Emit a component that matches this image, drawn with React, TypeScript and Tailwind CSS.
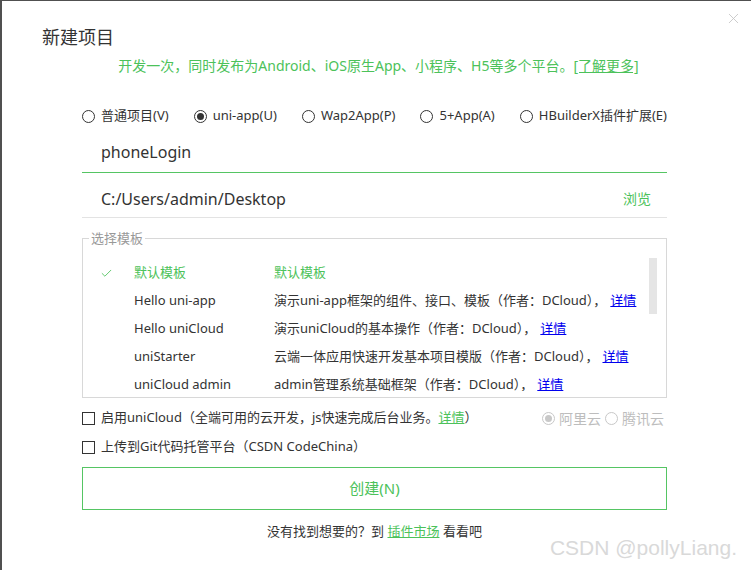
import { X, Check } from 'lucide-react';

const templates = [
  { name: '默认模板', desc: '默认模板', link: false, active: true },
  { name: 'Hello uni-app', desc: '演示uni-app框架的组件、接口、模板（作者：DCloud），', link: true, active: false },
  { name: 'Hello uniCloud', desc: '演示uniCloud的基本操作（作者：DCloud），', link: true, active: false },
  { name: 'uniStarter', desc: '云端一体应用快速开发基本项目模版（作者：DCloud），', link: true, active: false },
  { name: 'uniCloud admin', desc: 'admin管理系统基础框架（作者：DCloud），', link: true, active: false },
];

const types = ['普通项目(V)', 'uni-app(U)', 'Wap2App(P)', '5+App(A)', 'HBuilderX插件扩展(E)'];

function Radio({ checked, muted }: { checked?: boolean; muted?: boolean }) {
  return (
    <span
      className={`w-[13px] h-[13px] rounded-full border flex items-center justify-center shrink-0 ${
        muted ? 'border-[#c8c8c8]' : 'border-[#333]'
      }`}
    >
      {checked && <span className={`w-[7px] h-[7px] rounded-full ${muted ? 'bg-[#c8c8c8]' : 'bg-[#333]'}`} />}
    </span>
  );
}

function Box() {
  return <span className="w-[13px] h-[13px] border border-[#333] shrink-0" />;
}

export default function App() {
  return (
    <div
      className="relative w-[751px] h-[570px] bg-white border-t border-l-2 border-[#505050] text-[#333] overflow-hidden"
      style={{ fontFamily: '"Microsoft YaHei", "Noto Sans", "Noto Sans CJK SC", sans-serif' }}
    >
      <button className="absolute right-[9px] top-[9px] text-[#c4c4c4]">
        <X size={17} strokeWidth={1.2} />
      </button>

      <div className="pl-[40px] pt-[24px] h-[55px] text-[18px] leading-[24px]">新建项目</div>
      <div className="text-center text-[14px] leading-[20px] text-[#4cc25a] pl-[4px]">
        开发一次，同时发布为Android、iOS原生App、小程序、H5等多个平台。
        <span className="underline">[了解更多]</span>
      </div>

      <div className="ml-[80px] w-[585px] mt-[27px]">
        <div className="flex items-center justify-between h-[26px] text-[13px]">
          {types.map((t, i) => (
            <label key={t} className="flex items-center gap-[6px]">
              <Radio checked={i === 1} />
              <span>{t}</span>
            </label>
          ))}
        </div>

        <div className="flex items-center h-[42px] mt-[2px] pl-[19px] pt-[1px] text-[16px] border-b border-[#55c563]">
          phoneLogin
        </div>
        <div className="flex items-center justify-between h-[45px] pl-[19px] pr-[16px] pt-[7px] text-[16px] border-b border-[#e3e3e3]">
          <span>C:/Users/admin/Desktop</span>
          <span className="text-[14px] text-[#4cc25a]">浏览</span>
        </div>

        <fieldset className="mt-[12px] h-[168px] border border-[#d8d8d8] relative">
          <legend className="ml-[6px] px-[2px] text-[13px] text-[#999] leading-[16px]">选择模板</legend>
          <div className="h-[145px] overflow-hidden pt-[13px] relative">
            {templates.map((t) => (
              <div key={t.name} className="flex items-center h-[28px] text-[13px]">
                <span className="w-[51px] pl-[17px]">
                  {t.active && <Check size={13} strokeWidth={1.6} className="text-[#4cc25a]" />}
                </span>
                <span className={`w-[140px] ${t.active ? 'text-[#4cc25a]' : ''}`}>{t.name}</span>
                <span className={t.active ? 'text-[#4cc25a]' : ''}>
                  {t.desc}
                  {t.link && <span className="ml-[4px] text-[#0000ee] underline">详情</span>}
                </span>
              </div>
            ))}
            <div className="absolute right-[9px] top-[12px] w-[8px] h-[56px] bg-[#e5e5e5]" />
          </div>
        </fieldset>

        <div className="flex items-center justify-between h-[28px] mt-[6px] text-[13px]">
          <label className="flex items-center gap-[6px]">
            <Box />
            <span>
              启用uniCloud（全端可用的云开发，js快速完成后台业务。<span className="text-[#4cc25a] underline">详情</span>）
            </span>
          </label>
          <div className="flex items-center gap-[4px] text-[14px] text-[#bdbdbd] pr-[3px]">
            <Radio checked muted />
            <span>阿里云</span>
            <Radio muted />
            <span>腾讯云</span>
          </div>
        </div>
        <label className="flex items-center gap-[6px] h-[30px] text-[13px]">
          <Box />
          <span>上传到Git代码托管平台（CSDN CodeChina）</span>
        </label>

        <button className="mt-[5px] w-full h-[43px] border border-[#55c563] text-[#4cc25a] text-[15px]">
          创建(N)
        </button>

        <div className="text-center text-[13px] mt-[11px] leading-[20px]">
          没有找到想要的？到 <span className="text-[#4cc25a] underline">插件市场</span> 看看吧
        </div>
      </div>

      <div
        className="absolute right-[14px] bottom-[7px] text-[21px] text-[#d9d9d9]"
        style={{ fontFamily: '"Liberation Sans", Arial, sans-serif' }}
      >
        CSDN @pollyLiang.
      </div>
    </div>
  );
}
